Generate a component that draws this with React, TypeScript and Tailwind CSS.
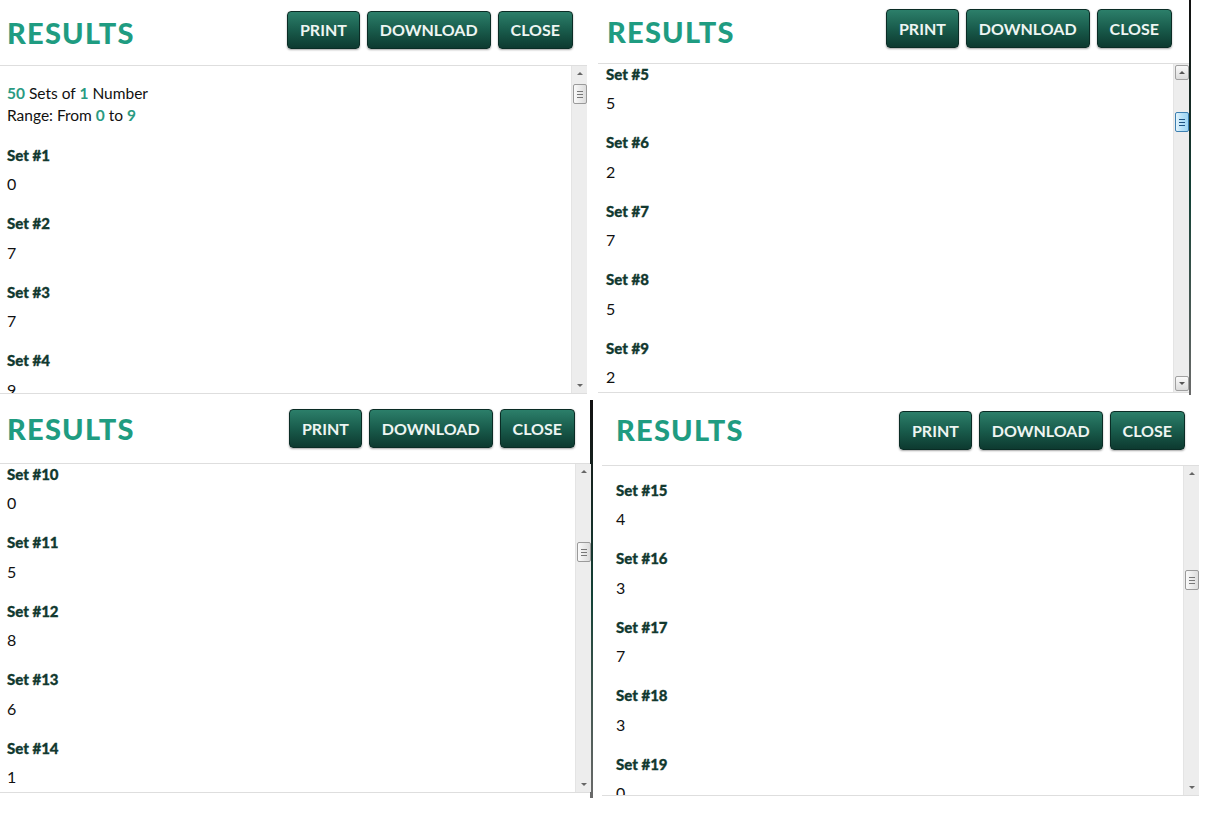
import React from 'react';

// ============================================
// Types
// ============================================
interface SetItem {
    n: number;
    value: number;
}

interface PanelProps {
    titlePad: string;
    headerH: string;
    btnTop: string;
    btnH: string;
    btnRight: string;
    bodyH: string;
    bodyPad: string;
    sets: SetItem[];
    intro?: boolean;
    thumbTop: number;
    blueThumb?: boolean;
    width: string;
}

const font = { fontFamily: 'Lato, "Open Sans", sans-serif' };

// ============================================
// Sub-Components
// ============================================
const ActionButton: React.FC<{ label: string; h: string }> = ({ label, h }) => (
    <button
        className={`${h} px-[12px] rounded-[4px] border border-[#0a2c25] bg-gradient-to-b from-[#2c7f6a] via-[#195c4c] to-[#0d3a30] text-[#eef5f2] text-[16px] font-bold shadow-[0_1px_2px_rgba(0,0,0,0.35)]`}
        style={font}
    >
        {label}
    </button>
);

const ScrollBar: React.FC<{ thumbTop: number; blue?: boolean }> = ({ thumbTop, blue }) => (
    <div className="relative w-[16px] h-full bg-[#ededed] border-l border-[#e4e4e4] flex flex-col items-center">
        {blue ? (
            <div className="mt-[1px] w-[14px] h-[15px] border border-[#a0a0a0] rounded-[2px] bg-gradient-to-b from-[#fafafa] to-[#dcdcdc] flex items-center justify-center">
                <div className="w-0 h-0 border-l-[3px] border-r-[3px] border-b-[3px] border-l-transparent border-r-transparent border-b-[#555]" />
            </div>
        ) : (
            <div className="h-[15px] flex items-center justify-center">
                <div className="w-0 h-0 border-l-[3px] border-r-[3px] border-b-[3px] border-l-transparent border-r-transparent border-b-[#666]" />
            </div>
        )}
        <div
            className={`absolute left-[1px] w-[14px] h-[20px] rounded-[2px] border flex flex-col items-center justify-center gap-[2px] ${
                blue
                    ? 'border-[#3c7fb1] bg-gradient-to-r from-[#e3f4fc] via-[#b6e0f7] to-[#9dd5f3]'
                    : 'border-[#9a9a9a] bg-gradient-to-r from-[#fafafa] to-[#dcdcdc]'
            }`}
            style={{ top: thumbTop }}
        >
            <div className={`w-[6px] h-[1px] ${blue ? 'bg-[#1c5180]' : 'bg-[#777]'}`} />
            <div className={`w-[6px] h-[1px] ${blue ? 'bg-[#1c5180]' : 'bg-[#777]'}`} />
            <div className={`w-[6px] h-[1px] ${blue ? 'bg-[#1c5180]' : 'bg-[#777]'}`} />
        </div>
        <div className="flex-1" />
        {blue ? (
            <div className="mb-[1px] w-[14px] h-[15px] border border-[#a0a0a0] rounded-[2px] bg-gradient-to-b from-[#fafafa] to-[#dcdcdc] flex items-center justify-center">
                <div className="w-0 h-0 border-l-[3px] border-r-[3px] border-t-[3px] border-l-transparent border-r-transparent border-t-[#555]" />
            </div>
        ) : (
            <div className="h-[15px] flex items-center justify-center">
                <div className="w-0 h-0 border-l-[3px] border-r-[3px] border-t-[3px] border-l-transparent border-r-transparent border-t-[#666]" />
            </div>
        )}
    </div>
);

const SetBlock: React.FC<{ item: SetItem }> = ({ item }) => (
    <div className="h-[68.5px] shrink-0">
        <div className="h-[20px] flex items-center text-[15px] font-black text-[#12392f] [-webkit-text-stroke:0.3px_#12392f]" style={font}>
            Set #{item.n}
        </div>
        <div className="mt-[9px] h-[20px] flex items-center text-[16px] text-[#111]" style={font}>
            {item.value}
        </div>
    </div>
);

const ResultsPanel: React.FC<PanelProps> = ({
    titlePad, headerH, btnTop, btnH, btnRight, bodyH, bodyPad, sets, intro, thumbTop, blueThumb, width
}) => (
    <div className={`${width} flex flex-col`}>
        {/* Header */}
        <div className={`${headerH} flex items-start justify-between border-b border-[#dedede] ${titlePad} ${btnRight}`}>
            <h1 className="self-center text-[29px] font-black tracking-[1.2px] text-[#1f9c81]" style={font}>
                RESULTS
            </h1>
            <div className={`flex gap-[7px] ${btnTop}`}>
                <ActionButton label="PRINT" h={btnH} />
                <ActionButton label="DOWNLOAD" h={btnH} />
                <ActionButton label="CLOSE" h={btnH} />
            </div>
        </div>

        {/* Scroll body */}
        <div className={`${bodyH} flex border-b border-[#dedede]`}>
            <div className={`flex-1 overflow-hidden flex flex-col ${bodyPad}`}>
                {intro && (
                    <div className="h-[80px] shrink-0 pt-[17px] text-[15.5px] text-[#111] leading-[22px]" style={font}>
                        <div>
                            <span className="font-bold text-[#2a9a82]">50</span> Sets of{' '}
                            <span className="font-bold text-[#2a9a82]">1</span> Number
                        </div>
                        <div>
                            Range: From <span className="font-bold text-[#2a9a82]">0</span> to{' '}
                            <span className="font-bold text-[#2a9a82]">9</span>
                        </div>
                    </div>
                )}
                {sets.map((s) => (
                    <SetBlock key={s.n} item={s} />
                ))}
            </div>
            <ScrollBar thumbTop={thumbTop} blue={blueThumb} />
        </div>
    </div>
);

// ============================================
// Main Component
// ============================================
const App: React.FC = () => {
    const p1: SetItem[] = [
        { n: 1, value: 0 }, { n: 2, value: 7 }, { n: 3, value: 7 }, { n: 4, value: 9 }
    ];
    const p2: SetItem[] = [
        { n: 5, value: 5 }, { n: 6, value: 2 }, { n: 7, value: 7 }, { n: 8, value: 5 }, { n: 9, value: 2 }
    ];
    const p3: SetItem[] = [
        { n: 10, value: 0 }, { n: 11, value: 5 }, { n: 12, value: 8 }, { n: 13, value: 6 }, { n: 14, value: 1 }
    ];
    const p4: SetItem[] = [
        { n: 15, value: 4 }, { n: 16, value: 3 }, { n: 17, value: 7 }, { n: 18, value: 3 }, { n: 19, value: 0 }
    ];

    return (
        <div className="w-[1209px] h-[819px] bg-white overflow-hidden grid grid-cols-[598px_611px] grid-rows-[395px_424px]">
            {/* Top left */}
            <div className="flex">
                <ResultsPanel
                    width="w-[587px]"
                    titlePad="pl-[7px]"
                    headerH="h-[66px]"
                    btnTop="pt-[11px]"
                    btnH="h-[38px]"
                    btnRight="pr-[14px]"
                    bodyH="h-[328px]"
                    bodyPad="pl-[7px] -mt-[1px]"
                    sets={p1}
                    intro
                    thumbTop={18}
                />
            </div>

            {/* Top right */}
            <div className="flex">
                <ResultsPanel
                    width="w-[591px]"
                    titlePad="pl-[9px]"
                    headerH="h-[64px]"
                    btnTop="pt-[9px]"
                    btnH="h-[39px]"
                    btnRight="pr-[17px]"
                    bodyH="h-[329px]"
                    bodyPad="pl-[8px]"
                    sets={p2}
                    thumbTop={48}
                    blueThumb
                />
                <div className="w-[2px] h-full bg-gradient-to-b from-[#111] via-[#124237] to-[#6a6a6a]" />
            </div>

            {/* Bottom left */}
            <div className="flex">
                <ResultsPanel
                    width="w-[591px]"
                    titlePad="pl-[7px]"
                    headerH="h-[69px]"
                    btnTop="pt-[14px]"
                    btnH="h-[39px]"
                    btnRight="pr-[16px]"
                    bodyH="h-[329px]"
                    bodyPad="pl-[7px]"
                    sets={p3}
                    thumbTop={78}
                />
            </div>

            {/* Bottom right */}
            <div className="flex -ml-[8px]">
                <div className="w-[3px] mt-[5px] h-[398px] bg-gradient-to-b from-[#111] via-[#124237] to-[#6a6a6a]" />
                <div className="pl-[9px]">
                    <ResultsPanel
                        width="w-[597px]"
                        titlePad="pl-[14px]"
                        headerH="h-[71px]"
                        btnTop="pt-[16px]"
                        btnH="h-[39px]"
                        btnRight="pr-[14px]"
                        bodyH="h-[330px]"
                        bodyPad="pl-[14px] pt-[14px]"
                        sets={p4}
                        thumbTop={104}
                    />
                </div>
            </div>
        </div>
    );
};

export default App;
